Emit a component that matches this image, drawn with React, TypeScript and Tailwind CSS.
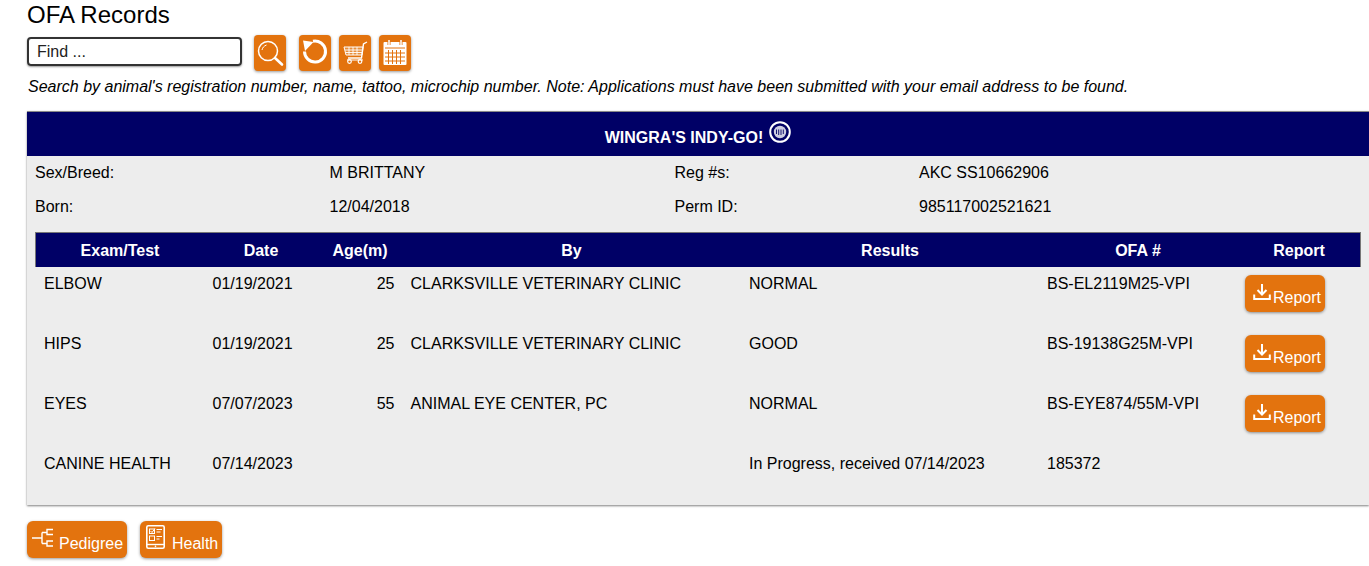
import React from "react";

const cols = "grid grid-cols-[168px_114px_84px_339px_298px_198px_124px]";

const registros = [
  { exame: "ELBOW", data: "01/19/2021", idade: "25", por: "CLARKSVILLE VETERINARY CLINIC", resultado: "NORMAL", ofa: "BS-EL2119M25-VPI", report: true },
  { exame: "HIPS", data: "01/19/2021", idade: "25", por: "CLARKSVILLE VETERINARY CLINIC", resultado: "GOOD", ofa: "BS-19138G25M-VPI", report: true },
  { exame: "EYES", data: "07/07/2023", idade: "55", por: "ANIMAL EYE CENTER, PC", resultado: "NORMAL", ofa: "BS-EYE874/55M-VPI", report: true },
  { exame: "CANINE HEALTH", data: "07/14/2023", idade: "", por: "", resultado: "In Progress, received 07/14/2023", ofa: "185372", report: false },
];

function IconButton({ children, className = "" }: { children: React.ReactNode; className?: string }) {
  return (
    <button className={`flex h-9 w-8 items-center justify-center rounded-[4px] bg-[#e3730e] shadow-[0_1px_3px_rgba(0,0,0,0.4)] ${className}`}>
      {children}
    </button>
  );
}

function IconeDownload() {
  return (
    <svg width="18" height="18" viewBox="0 0 18 18" fill="none" stroke="white" strokeWidth="2">
      <path d="M9 1V11" />
      <path d="M4.5 7L9 11.5L13.5 7" />
      <path d="M1.2 11.5V16H16.8V11.5" />
    </svg>
  );
}

export default function App() {
  return (
    <div className="h-[566px] overflow-hidden bg-white font-['Liberation_Sans',Arial,sans-serif] text-base text-black">
      <h1 className="pl-[27px] pt-[1px] text-2xl leading-[28px] text-black">OFA Records</h1>

      <div className="flex pl-[27px] pt-[6px]">
        <input
          placeholder="Find ..."
          className="mt-[2px] h-[29px] w-[215px] rounded-[4px] border-2 border-[#333] px-2 text-base shadow-[0_1px_2px_rgba(0,0,0,0.4)] outline-none placeholder:text-[#222]"
        />
        <IconButton className="ml-[12px]">
          <svg width="28" height="28" viewBox="0 0 28 28" fill="none" stroke="white">
            <circle cx="12" cy="12" r="9.5" strokeWidth="1.5" />
            <path d="M6 11C6.5 8.5 8 7 10.5 6" strokeWidth="1" />
            <path d="M19 19L26 25.5" strokeWidth="2.6" strokeLinecap="round" />
          </svg>
        </IconButton>
        <IconButton className="ml-[13px]">
          <svg width="30" height="30" viewBox="0 0 30 30" fill="none" stroke="white">
            <path d="M13 3.2A10.5 10.5 0 1 1 4.5 13.5" strokeWidth="3" />
            <path d="M3 2.5L13.5 4L5 13Z" fill="white" stroke="none" />
          </svg>
        </IconButton>
        <IconButton className="ml-2">
          <svg width="26" height="26" viewBox="0 0 26 26" fill="none" stroke="white">
            <path d="M25 2L21.5 4L19.5 18H6" strokeWidth="1.4" />
            <path d="M2 7H21L20 15H4Z" fill="white" fillOpacity="0.2" strokeWidth="1" />
            <path d="M7 7V15M11 7V15M15 7V15M3 10H21M3.5 12.5H20.5" strokeWidth="0.9" />
            <circle cx="7.5" cy="21.5" r="1.8" strokeWidth="1.2" />
            <circle cx="18" cy="21.5" r="1.8" strokeWidth="1.2" />
            <path d="M5 20H21" strokeWidth="1" />
          </svg>
        </IconButton>
        <IconButton className="ml-2">
          <svg width="26" height="28" viewBox="0 0 26 28" fill="none">
            <rect x="1.5" y="3" width="23" height="23" rx="1" fill="white" />
            <path d="M3 9H23" stroke="#e3730e" strokeWidth="1" />
            <path d="M6.5 11V25M10.5 11V25M14.5 11V25M18.5 11V25M3 14H23M3 18H23M3 22H23" stroke="#e3730e" strokeWidth="1" />
            <path d="M7 3V6M19 3V6" stroke="#e3730e" strokeWidth="3" />
            <path d="M7 1V6M19 1V6" stroke="white" strokeWidth="1.5" />
          </svg>
        </IconButton>
      </div>

      <p className="pl-[28px] pt-[7px] text-base italic leading-[18px] text-black">
        Search by animal's registration number, name, tattoo, microchip number. Note: Applications must have been submitted with your email address to be found.
      </p>

      <div className="ml-[27px] mt-[15px] h-[394px] border-t border-[#888] bg-[#ededed] shadow-[0_1px_2px_rgba(0,0,0,0.5)]">
        <div className="flex h-[44px] items-center justify-center bg-[#000066] font-bold text-white">
          <span className="pt-[7px]">WINGRA'S INDY-GO!</span>
          <svg className="mb-[4px] ml-[6px]" width="22" height="22" viewBox="0 0 22 22" fill="none">
            <circle cx="11" cy="11" r="9.8" stroke="white" strokeWidth="2" />
            <circle cx="11" cy="11" r="6.2" fill="white" fillOpacity="0.8" />
            <path d="M7.5 8.5V13M9.7 8.5V14M12 8.5V14M14.3 8.5V13" stroke="#000066" strokeWidth="0.9" />
          </svg>
        </div>

        <div className="grid grid-cols-[294.5px_345px_244.5px_1fr] pl-[8px] pt-[8px]">
          <div className="h-[34px] leading-[18px]">Sex/Breed:</div>
          <div className="h-[34px] leading-[18px]">M BRITTANY</div>
          <div className="h-[34px] leading-[18px]">Reg #s:</div>
          <div className="h-[34px] leading-[18px]">AKC SS10662906</div>
          <div className="h-[26px] leading-[18px]">Born:</div>
          <div className="h-[26px] leading-[18px]">12/04/2018</div>
          <div className="h-[26px] leading-[18px]">Perm ID:</div>
          <div className="h-[26px] leading-[18px]">985117002521621</div>
        </div>

        <div className="mx-[8px] mt-[8px]">
          <div className={`${cols} h-[35px] items-center border border-b-0 border-[#777] bg-[#000066] pt-[1px] text-center font-bold text-white`}>
            <div>Exam/Test</div>
            <div>Date</div>
            <div>Age(m)</div>
            <div>By</div>
            <div>Results</div>
            <div>OFA #</div>
            <div>Report</div>
          </div>
          {registros.map((r) => (
            <div className={`${cols} h-[60px] pl-[1px]`} key={r.exame}>
              <div className="pl-2 pt-[8px] leading-[18px]">{r.exame}</div>
              <div className="pl-[8.5px] pt-[8px] leading-[18px]">{r.data}</div>
              <div className="pr-[7.5px] pt-[8px] text-right leading-[18px]">{r.idade}</div>
              <div className="pl-[8.5px] pt-[8px] leading-[18px]">{r.por}</div>
              <div className="pl-2 pt-[8px] leading-[18px]">{r.resultado}</div>
              <div className="pl-2 pt-[8px] leading-[18px]">{r.ofa}</div>
              <div className="pl-2 pt-[8px]">
                {r.report && (
                  <button className="flex h-[37px] w-[80px] items-start rounded-[6px] bg-[#e3730e] pl-[8px] pt-[8px] text-white shadow-[0_1px_3px_rgba(0,0,0,0.4)]">
                    <IconeDownload />
                    <span className="ml-[2px] pt-[6px] leading-[18px]">Report</span>
                  </button>
                )}
              </div>
            </div>
          ))}
        </div>
      </div>

      <div className="flex gap-[13px] pl-[27px] pt-[16px]">
        <button className="flex h-[37px] w-[100px] items-start rounded-[6px] bg-[#e3730e] pl-[5px] pt-[6px] text-white shadow-[0_1px_3px_rgba(0,0,0,0.4)]">
          <svg width="22" height="22" viewBox="0 0 22 22" fill="none" stroke="white" strokeWidth="1.4">
            <path d="M0 11H10M10 5.5V16.5M10 5.5H15M10 16.5H15" />
            <path d="M21 2.5H15V7.5H21" />
            <path d="M21 14H15V19H21" />
          </svg>
          <span className="ml-[5px] pt-[8px] leading-[18px]">Pedigree</span>
        </button>
        <button className="flex h-[37px] w-[82px] items-start rounded-[6px] bg-[#e3730e] pl-[6px] pt-[4px] text-white shadow-[0_1px_3px_rgba(0,0,0,0.4)]">
          <svg width="19" height="24" viewBox="0 0 19 24" fill="none" stroke="white">
            <rect x="0.8" y="0.8" width="17.4" height="22.4" rx="1.5" strokeWidth="1.6" />
            <path d="M1 19.5H18" strokeWidth="1.4" />
            <circle cx="9.5" cy="21.3" r="0.6" fill="white" strokeWidth="0.5" />
            <rect x="3.5" y="4" width="5" height="4.5" strokeWidth="1" />
            <path d="M4.5 6L6 7.5L9 3.5" strokeWidth="1" />
            <rect x="3.5" y="11" width="5" height="4.5" strokeWidth="1" />
            <path d="M10.5 4.5H16M10.5 7H14.5M10.5 11.5H16M10.5 14H13.5" strokeWidth="1" />
          </svg>
          <span className="ml-[7px] pt-[10px] leading-[18px]">Health</span>
        </button>
      </div>
    </div>
  );
}
